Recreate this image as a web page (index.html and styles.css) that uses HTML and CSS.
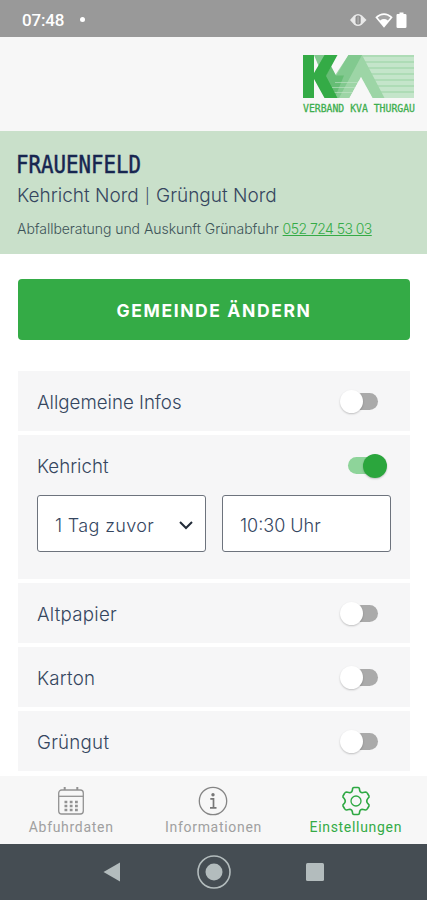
FILE: index.html
```html
<!DOCTYPE html>
<html lang="de">
<head>
<meta charset="utf-8">
<meta name="viewport" content="width=device-width, initial-scale=1">
<title>Einstellungen</title>
<link rel="stylesheet" href="styles.css">
</head>
<body>
<div class="app">
  <div class="status">
    <span class="clock">07:48</span><span class="dot"></span>
    <svg class="status-icons" width="60" height="20" viewBox="0 0 60 20">
      <path d="M2 10 L6 5.500 Q10 2.500 14 5.500 L18.500 10 L14 14.500 Q10 17.500 6 14.500 Z" fill="#e9e9e9"/>
      <rect x="7.500" y="5.500" width="5.200" height="9" rx="2" fill="#8e8e8e"/>
      <rect x="9.300" y="6.500" width="1.600" height="7" fill="#aaa"/>
      <path d="M27.300 7.200 Q36 -0.500 44.700 7.200 L36 17.800 Z" fill="#fff"/>
      <path d="M29.600 7.400 Q36 2.800 42.400 7.400 L39.900 10.400 Q36 7.600 32.100 10.400 Z" fill="#a4a4a4"/>
      <path d="M49 4 H51.500 V2.500 H55.500 V4 H57.200 Q58.500 4 58.500 5.300 V16.700 Q58.500 18 57.200 18 H49.800 Q48.500 18 48.500 16.700 V5 Z" fill="#fff"/>
    </svg>
  </div>
  <header class="header">
    <svg class="logo" width="118" height="66" viewBox="0 0 118 66">
      <rect x="57" y="1" width="55" height="43" fill="#c4e5ca"/>
      <g fill="#aedcb6">
        <rect x="57" y="1" width="55" height="2"/><rect x="57" y="7" width="55" height="2"/>
        <rect x="57" y="13" width="55" height="2"/><rect x="57" y="19" width="55" height="2"/>
        <rect x="57" y="25" width="55" height="2"/><rect x="57" y="31" width="55" height="2"/>
        <rect x="57" y="37" width="55" height="2"/>
      </g>
      <path d="M46.500 1 H60 L82.500 44 H70.500 L59 23 L47.500 44 H34 L24 22 L29 20 L33 21.500 Z" fill="#9dd5a6"/>
      <path d="M46.500 1 H60 L37 44 H33 L24 22 L30 20 L34 22 Z" fill="#82c98f"/>
      <path d="M29 12 L34 21.500 L42 21.500 L33.500 42 L23 23 Z" fill="#66bd75"/>
      <path d="M33 28.500 H58 M30 33.500 H64 M32 38.500 H67" stroke="#c4e5ca" stroke-width="1" opacity="0.600"/>
      <path d="M59 23 L70.500 44 H47.500 Z" fill="#f7f7f7"/>
      <path d="M12 1 H25 L17 13 Z" fill="#82c98f"/>
      <path d="M12 5 L17 13 L12 19 Z" fill="#f7f7f7"/>
      <path d="M1 1 H12 V19 L22.500 1 H35.500 L24 22 L35.500 44 H22.500 L12 25 V44 H1 Z" fill="#34ab46"/>
      <text class="logo-text" x="1" y="57.500" textLength="112" lengthAdjust="spacingAndGlyphs">VERBAND KVA THURGAU</text>
    </svg>
  </header>
  <section class="place">
    <h1 class="place-name">FRAUENFELD</h1>
    <p class="place-area">Kehricht Nord <span class="bar">|</span> Grüngut Nord</p>
    <p class="place-help">Abfallberatung und Auskunft Grünabfuhr <a class="phone">052 724 53 03</a></p>
  </section>
  <main class="main">
    <button class="change">GEMEINDE ÄNDERN</button>
    <div class="list">
      <div class="item"><div class="row"><span class="label">Allgemeine Infos</span><span class="switch"></span></div></div>
      <div class="item open">
        <div class="row"><span class="label">Kehricht</span><span class="switch on"></span></div>
        <div class="fields">
          <div class="field"><span class="day">1 Tag zuvor</span><svg width="16" height="10" viewBox="0 0 16 10"><path d="M2 2 L8 8 L14 2" fill="none" stroke="#222b38" stroke-width="2"/></svg></div>
          <div class="field"><span class="time">10:30 Uhr</span></div>
        </div>
      </div>
      <div class="item"><div class="row"><span class="label wide">Altpapier</span><span class="switch"></span></div></div>
      <div class="item"><div class="row"><span class="label wide">Karton</span><span class="switch"></span></div></div>
      <div class="item"><div class="row"><span class="label wide">Grüngut</span><span class="switch"></span></div></div>
    </div>
  </main>
  <nav class="tabs">
    <div class="tab">
      <svg width="30" height="30" viewBox="0 0 30 30" fill="none" stroke="#929292" stroke-width="1.300">
        <rect x="2.700" y="4" width="24.600" height="24" rx="3"/><path d="M2.700 10.300 H27.300"/><path d="M8.700 1 V4 M21.300 1 V4" stroke-width="2"/>
        <path d="M8.500 16 H22 M8.500 20 H22 M8.500 24 H22" stroke-width="2.600" stroke-dasharray="2.800 2.450"/>
      </svg>
      <span class="tab-text">Abfuhrdaten</span>
    </div>
    <div class="tab">
      <svg width="30" height="30" viewBox="0 0 30 30" fill="none" stroke="#858585" stroke-width="1.300">
        <circle cx="15" cy="15" r="13.700"/><circle cx="15" cy="8.700" r="1.700" fill="#777" stroke="none"/>
        <path d="M12.300 12.800 H15.500 V21.500 M12 21.800 H18.500" stroke="#777" stroke-width="1.700"/>
      </svg>
      <span class="tab-text">Informationen</span>
    </div>
    <div class="tab active">
      <svg width="30" height="30" viewBox="0 0 30 30" fill="none" stroke="#2da842" stroke-width="1.600" stroke-linejoin="round">
        <path d="M13 1.500 H17 Q18.500 1.500 18.500 3.500 Q18.700 6.200 21 6.700 L24.500 6 Q25.800 6 26.500 7.500 L28 10 Q28.500 11.300 27 12.200 Q24.500 15 27 17.800 Q28.500 18.700 28 20 L26.500 22.500 Q25.800 24 24.500 24 L21 23.300 Q18.700 23.800 18.500 26.500 Q18.500 28.500 17 28.500 H13 Q11.500 28.500 11.500 26.500 Q11.300 23.800 9 23.300 L5.500 24 Q4.200 24 3.500 22.500 L2 20 Q1.500 18.700 3 17.800 Q5.500 15 3 12.200 Q1.500 11.300 2 10 L3.500 7.500 Q4.200 6 5.500 6 L9 6.700 Q11.300 6.200 11.500 3.500 Q11.500 1.500 13 1.500 Z"/>
        <circle cx="15" cy="15" r="5" stroke-width="1.300"/>
      </svg>
      <span class="tab-text">Einstellungen</span>
    </div>
  </nav>
  <div class="system">
    <svg width="20" height="22" viewBox="0 0 20 22"><path d="M1.500 11 L18 1.500 V20.500 Z" fill="#b3bcbd"/></svg>
    <svg width="36" height="36" viewBox="0 0 36 36"><circle cx="18" cy="18" r="16" fill="none" stroke="#b3bcbd" stroke-width="1.600"/><circle cx="18" cy="18" r="8.500" fill="#b3bcbd"/></svg>
    <svg width="20" height="20" viewBox="0 0 20 20"><rect x="1" y="1" width="18" height="18" rx="1.500" fill="#b3bcbd"/></svg>
  </div>
</div>
</body>
</html>
```
FILE: styles.css
```css
* { box-sizing: border-box; }
body { margin: 0; background: #fff; font-family: Inter, "Liberation Sans", sans-serif; color: #35465f; }
h1, p { margin: 0; font-weight: 400; white-space: nowrap; }
.app { width: 427px; height: 900px; display: flex; flex-direction: column; overflow: hidden; }
.status { height: 37px; flex: none; background: #999; display: flex; align-items: center; padding: 2px 19px 0 22px; }
.clock { font: 500 17px Roboto, sans-serif; color: #fff; letter-spacing: -0.2px; }
.dot { width: 5px; height: 5px; border-radius: 50%; background: #fff; margin-left: 16px; }
.status-icons { margin-left: auto; }
.header { height: 94px; flex: none; background: #f7f7f7; display: flex; justify-content: flex-end; padding: 17px 7px 0 0; }
.logo { display: block; overflow: visible; }
.logo-text { font: 400 11px "DejaVu Sans Mono", monospace; fill: #3dae4e; stroke: #3dae4e; stroke-width: 0.3px; }
.place { height: 123px; flex: none; background: #c9e0ca; padding: 20px 17px 0; }
.place-name { font: 400 24px/28px "DejaVu Sans Mono", monospace; color: #172650; -webkit-text-stroke: 0.5px #172650; transform: scaleX(0.865); transform-origin: 0 50%; margin-left: -1px; }
.place-area { font-size: 19px; font-weight: 300; line-height: 26px; margin-top: 4px; }
.bar { font-size: 15px; position: relative; top: -1px; margin: 0 1px; }
.place-help { font-size: 14px; font-weight: 300; line-height: 20px; margin-top: 9px; letter-spacing: -0.05px; color: #3d5358; }
.phone { color: #34ab46; text-decoration: underline; letter-spacing: -0.55px; }
.main { height: 522px; flex: none; padding: 25px 17px 0 18px; overflow: hidden; }
.change { display: block; width: 392px; height: 61px; border: 0; border-radius: 4px; background: #34ab46; color: #fff; font: 700 17.5px Inter, sans-serif; letter-spacing: 1.6px; padding: 2px 0 0; }
.list { display: flex; flex-direction: column; gap: 4px; margin-top: 31px; }
.item { width: 392px; height: 60px; background: #f6f6f7; padding: 0 19px; flex: none; }
.item.open { height: 144px; }
.row { height: 61px; display: flex; align-items: center; justify-content: space-between; }
.label { font-size: 18.7px; font-weight: 300; padding-top: 2px; }
.label.wide { letter-spacing: 0.25px; }
.switch { width: 34px; height: 17px; border-radius: 9px; background: #aaa; margin-right: 13px; display: flex; align-items: center; }
.switch::before { content: ""; width: 23px; height: 23px; flex: none; border-radius: 50%; background: #fff; margin-left: -4px; box-shadow: 0 1px 2px rgba(0, 0, 0, .22); }
.switch.on { background: #8ed49a; margin-right: 9px; }
.switch.on::before { width: 24px; height: 24px; background: #2ba63d; margin-left: 15px; }
.fields { display: flex; gap: 16px; margin-top: -1px; }
.field { width: 169px; height: 57px; border: 1px solid #6d737d; border-radius: 3px; background: #fff; padding: 3px 11px 0 17px; display: flex; align-items: center; justify-content: space-between; font-size: 18px; font-weight: 300; white-space: nowrap; }
.day { letter-spacing: 0.35px; }
.tabs { height: 68px; flex: none; background: #f7f7f7; display: grid; grid-template-columns: repeat(3, 1fr); }
.tab { display: flex; flex-direction: column; align-items: center; padding-top: 10px; color: #a0a0a0; }
.tab svg { display: block; }
.tab-text { font: 400 14px/16px Roboto, sans-serif; letter-spacing: 0.7px; margin-top: 3px; }
.active { color: #34ab46; }
.system { flex: 1; background: #454d53; display: flex; align-items: center; justify-content: space-between; padding: 0 102px; }
```
